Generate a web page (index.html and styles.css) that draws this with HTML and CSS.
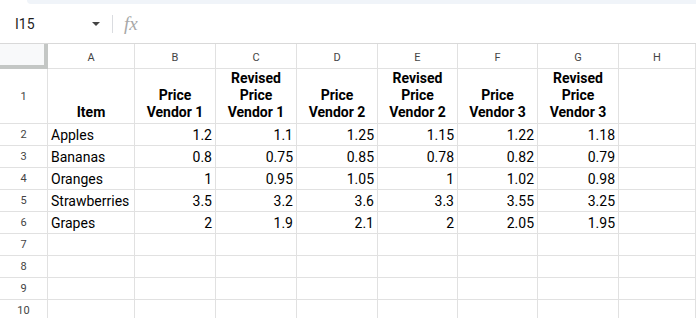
FILE: index.html
```html
<!DOCTYPE html>
<html lang="en">
<head>
    <meta charset="UTF-8">
    <title>Vendor Prices</title>
    <link rel="stylesheet" href="styles.css">
</head>
<body>
    <div class="top-band"></div>

    <div class="formula-bar">
        <div class="name-box">I15</div>
        <span class="caret"></span>
        <span class="divider"></span>
        <span class="fx">fx</span>
    </div>

    <div class="sheet">
        <div class="corner"></div>
        <div class="col-head">A</div>
        <div class="col-head">B</div>
        <div class="col-head">C</div>
        <div class="col-head">D</div>
        <div class="col-head">E</div>
        <div class="col-head">F</div>
        <div class="col-head">G</div>
        <div class="col-head">H</div>

        <div class="row-head">1</div>
        <div class="cell title">Item</div>
        <div class="cell title">Price<br>Vendor 1</div>
        <div class="cell title">Revised<br>Price<br>Vendor 1</div>
        <div class="cell title">Price<br>Vendor 2</div>
        <div class="cell title">Revised<br>Price<br>Vendor 2</div>
        <div class="cell title">Price<br>Vendor 3</div>
        <div class="cell title">Revised<br>Price<br>Vendor 3</div>
        <div class="cell"></div>

        <div class="row-head">2</div>
        <div class="cell">Apples</div>
        <div class="cell num">1.2</div>
        <div class="cell num">1.1</div>
        <div class="cell num">1.25</div>
        <div class="cell num">1.15</div>
        <div class="cell num">1.22</div>
        <div class="cell num">1.18</div>
        <div class="cell"></div>

        <div class="row-head">3</div>
        <div class="cell">Bananas</div>
        <div class="cell num">0.8</div>
        <div class="cell num">0.75</div>
        <div class="cell num">0.85</div>
        <div class="cell num">0.78</div>
        <div class="cell num">0.82</div>
        <div class="cell num">0.79</div>
        <div class="cell"></div>

        <div class="row-head">4</div>
        <div class="cell">Oranges</div>
        <div class="cell num">1</div>
        <div class="cell num">0.95</div>
        <div class="cell num">1.05</div>
        <div class="cell num">1</div>
        <div class="cell num">1.02</div>
        <div class="cell num">0.98</div>
        <div class="cell"></div>

        <div class="row-head">5</div>
        <div class="cell">Strawberries</div>
        <div class="cell num">3.5</div>
        <div class="cell num">3.2</div>
        <div class="cell num">3.6</div>
        <div class="cell num">3.3</div>
        <div class="cell num">3.55</div>
        <div class="cell num">3.25</div>
        <div class="cell"></div>

        <div class="row-head">6</div>
        <div class="cell">Grapes</div>
        <div class="cell num">2</div>
        <div class="cell num">1.9</div>
        <div class="cell num">2.1</div>
        <div class="cell num">2</div>
        <div class="cell num">2.05</div>
        <div class="cell num">1.95</div>
        <div class="cell"></div>

        <div class="row-head">7</div>
        <div class="cell"></div><div class="cell"></div><div class="cell"></div><div class="cell"></div>
        <div class="cell"></div><div class="cell"></div><div class="cell"></div><div class="cell"></div>

        <div class="row-head">8</div>
        <div class="cell"></div><div class="cell"></div><div class="cell"></div><div class="cell"></div>
        <div class="cell"></div><div class="cell"></div><div class="cell"></div><div class="cell"></div>

        <div class="row-head">9</div>
        <div class="cell"></div><div class="cell"></div><div class="cell"></div><div class="cell"></div>
        <div class="cell"></div><div class="cell"></div><div class="cell"></div><div class="cell"></div>

        <div class="row-head">10</div>
        <div class="cell"></div><div class="cell"></div><div class="cell"></div><div class="cell"></div>
        <div class="cell"></div><div class="cell"></div><div class="cell"></div><div class="cell"></div>
    </div>
</body>
</html>
```

FILE: styles.css
```css
body {
    margin: 0;
    background-color: #fff;
    font-family: Roboto, Arial, sans-serif;
    overflow: hidden;
}

.top-band {
    height: 4px;
    margin-left: 27px;
    background-color: #f0f4f9;
    border-bottom-left-radius: 8px;
}

.formula-bar {
    display: flex;
    align-items: center;
    height: 39px;
    border-bottom: 1px solid #d9d9d9;
}

.name-box {
    width: 72px;
    padding-left: 15px;
    font-size: 14px;
    color: #1f1f1f;
}

.caret {
    width: 0;
    height: 0;
    border-left: 4px solid transparent;
    border-right: 4px solid transparent;
    border-top: 4px solid #444;
    margin-left: 5px;
}

.divider {
    width: 1px;
    height: 18px;
    background-color: #dadce0;
    margin-left: 12px;
}

.fx {
    margin-left: 11px;
    font-family: "Liberation Serif", serif;
    font-style: italic;
    font-size: 19px;
    color: #a8a8a8;
}

.sheet {
    display: grid;
    grid-template-columns: 48px 87px 81px 81px 81px 80px 80px 81px 1fr;
    grid-template-rows: 25px 55px repeat(9, 22px);
}

.sheet > div {
    box-sizing: border-box;
    border-right: 1px solid #e1e1e1;
    border-bottom: 1px solid #e1e1e1;
}

.sheet > .corner {
    background-color: #f8f9fa;
    border-right: 4px solid #c4c7c5;
    border-bottom: 4px solid #c4c7c5;
}

.col-head {
    display: flex;
    align-items: center;
    justify-content: center;
    padding-top: 2px;
    font-size: 11px;
    color: #444;
}

.row-head {
    display: flex;
    align-items: center;
    justify-content: center;
    font-size: 11px;
    color: #444;
}

.cell {
    display: flex;
    align-items: center;
    padding: 0 3px;
    font-size: 14px;
    color: #000;
    white-space: nowrap;
}

.cell.num {
    justify-content: flex-end;
}

.cell.title {
    align-items: flex-end;
    justify-content: center;
    text-align: center;
    font-weight: bold;
    line-height: 17px;
    padding-bottom: 2px;
}
```
